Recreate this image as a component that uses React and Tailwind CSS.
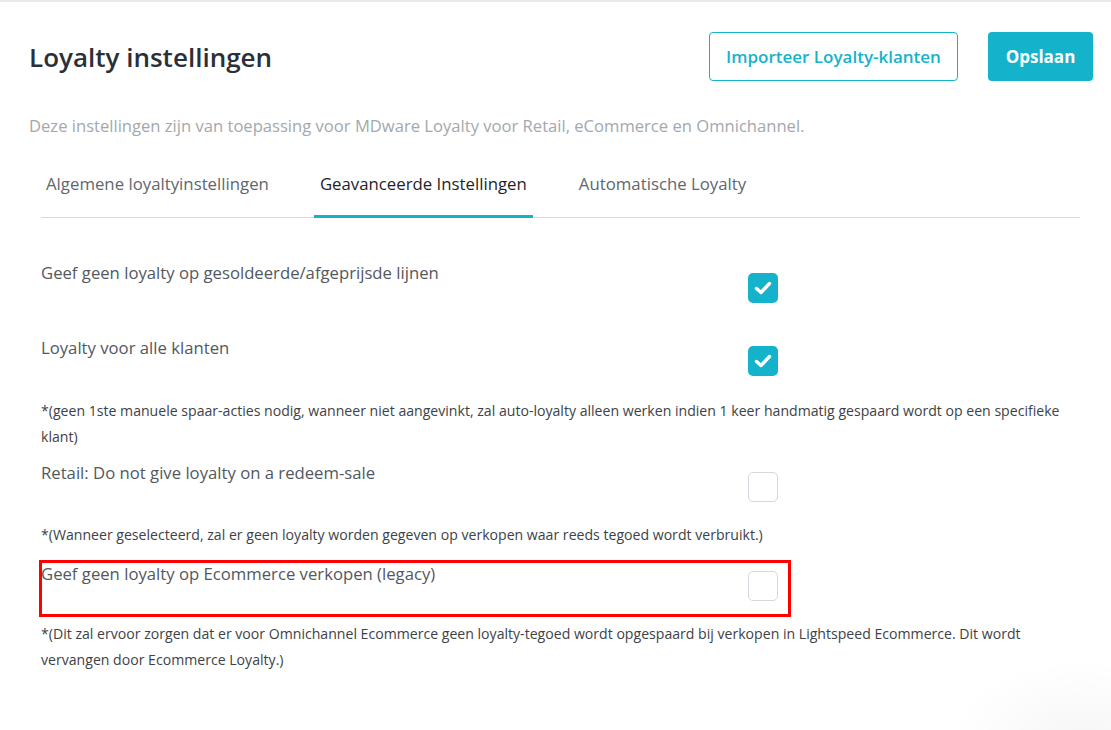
import React from "react";

const font = { fontFamily: '"Open Sans", "Noto Sans", sans-serif' };

function Check({ checked }) {
  if (checked) {
    return (
      <div className="w-[30px] h-[30px] rounded-[5px] bg-[#15b3cb] flex items-center justify-center">
        <svg width="20" height="20" viewBox="0 0 20 20">
          <path d="M3.5 10.5 L8 14.5 L16.5 5.5" fill="none" stroke="white" strokeWidth="3.4" strokeLinecap="round" strokeLinejoin="round" />
        </svg>
      </div>
    );
  }
  return <div className="w-[30px] h-[30px] rounded-[5px] border border-[#d3d8de] bg-white" />;
}

function Row({ label, checked, h, cbTop, children }) {
  return (
    <div className={"flex relative " + h}>
      <div className="w-[707px] text-[16.7px] leading-[24px] text-[#53585e]">{label}</div>
      <div className={cbTop}>
        <Check checked={checked} />
      </div>
      {children}
    </div>
  );
}

export default function App() {
  return (
    <div style={font} className="relative w-full h-[730px] bg-white border-t-2 border-[#e6e9ed] overflow-hidden">
      <div className="flex items-start justify-between pl-[29px] pr-[18px] pt-[30px]">
        <h1 className="text-[26px] leading-[36px] font-semibold text-[#2a3039] mt-[7px]">Loyalty instellingen</h1>
        <div className="flex gap-[30px]">
          <button className="h-[49px] w-[249px] rounded-[4px] border border-[#15b3cb] text-[#15b3cb] text-[17px] font-semibold">
            Importeer Loyalty-klanten
          </button>
          <button className="h-[49px] w-[105px] rounded-[4px] bg-[#15b3cb] text-white text-[17px] font-bold">
            Opslaan
          </button>
        </div>
      </div>
      <p className="pl-[29px] mt-[33px] text-[16.6px] leading-[24px] text-[#a3a8ad]">
        Deze instellingen zijn van toepassing voor MDware Loyalty voor Retail, eCommerce en Omnichannel.
      </p>
      <div className="ml-[41px] mr-[31px] mt-[34px] border-b border-[#d5dae0] flex gap-[40px] text-[16.8px] leading-[24px]">
        <div className="px-[5px] pb-[21px] text-[#60676e]">Algemene loyaltyinstellingen</div>
        <div className="px-[6px] pb-[18px] text-[#1f2329] border-b-[3px] border-[#15b3cb] mb-[-1px]">Geavanceerde Instellingen</div>
        <div className="px-[6px] pb-[21px] text-[#60676e]">Automatische Loyalty</div>
      </div>
      <div className="ml-[41px] mr-[31px] mt-[43px]">
        <Row label="Geef geen loyalty op gesoldeerde/afgeprijsde lijnen" checked h="h-[75px]" cbTop="mt-[12px]" />
        <Row label="Loyalty voor alle klanten" checked h="h-[62px]" cbTop="mt-[10px]" />
        <p className="text-[14.1px] leading-[26px] text-[#3d4246]">
          *(geen 1ste manuele spaar-acties nodig, wanneer niet aangevinkt, zal auto-loyalty alleen werken indien 1 keer handmatig gespaard wordt op een specifieke klant)
        </p>
        <div className="mt-[11px]">
          <Row label="Retail: Do not give loyalty on a redeem-sale" h="h-[61px]" cbTop="mt-[11px]" />
        </div>
        <p className="text-[14.1px] leading-[26px] text-[#3d4246]">
          *(Wanneer geselecteerd, zal er geen loyalty worden gegeven op verkopen waar reeds tegoed wordt verbruikt.)
        </p>
        <div className="mt-[14px]">
          <Row label="Geef geen loyalty op Ecommerce verkopen (legacy)" h="h-[59px]" cbTop="mt-[9px]">
            <div className="absolute left-[-2px] top-[-2px] w-[752px] h-[57px] border-[3px] border-[#ff0000] pointer-events-none" />
          </Row>
        </div>
        <p className="text-[14.1px] leading-[26px] text-[#3d4246]">
          *(Dit zal ervoor zorgen dat er voor Omnichannel Ecommerce geen loyalty-tegoed wordt opgespaard bij verkopen in Lightspeed Ecommerce. Dit wordt vervangen door Ecommerce Loyalty.)
        </p>
      </div>
      <div className="absolute right-[-100px] bottom-[-90px] w-[260px] h-[160px] bg-[radial-gradient(closest-side,rgba(0,0,0,0.035),rgba(0,0,0,0))] pointer-events-none" />
    </div>
  );
}
